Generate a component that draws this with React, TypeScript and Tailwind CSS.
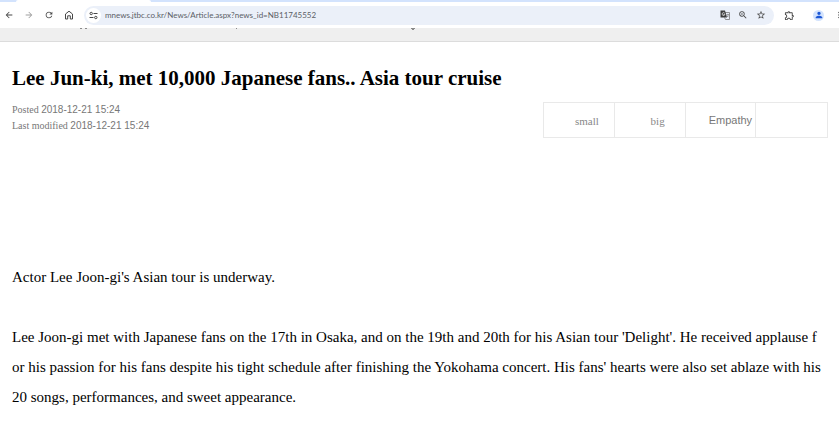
import React, { useState } from 'react';
import {
  MdArrowBack,
  MdArrowForward,
  MdRefresh,
  MdZoomIn,
  MdStarBorder,
  MdOutlineExtension,
  MdPerson,
  MdMoreVert,
} from 'react-icons/md';

const bodyLines = [
  "Lee Joon-gi met with Japanese fans on the 17th in Osaka, and on the 19th and 20th for his Asian tour 'Delight'. He received applause f",
  "or his passion for his fans despite his tight schedule after finishing the Yokohama concert. His fans' hearts were also set ablaze with his",
  '20 songs, performances, and sweet appearance.',
];

function BrowserBar() {
  const [url, setUrl] = useState('mnews.jtbc.co.kr/News/Article.aspx?news_id=NB11745552');

  return (
    <header className="bg-white">
      <div className="flex h-[2px] bg-[#d3e3fd]">
        <div className="ml-4 w-[135px] rounded-t-sm bg-white" />
      </div>
      <div className="flex h-[26px] items-center overflow-hidden text-[#474747]">
        <nav className="flex w-[84px] shrink-0 items-center gap-[10px] pl-1">
          <button type="button" aria-label="Back"><MdArrowBack className="h-[10px] w-[10px]" /></button>
          <button type="button" aria-label="Forward"><MdArrowForward className="h-[10px] w-[10px] text-[#a0a0a0]" /></button>
          <button type="button" aria-label="Reload"><MdRefresh className="h-[10px] w-[10px]" /></button>
          <button type="button" aria-label="Home">
            <svg viewBox="0 0 10 10" className="h-[10px] w-[10px]" fill="none" stroke="currentColor" strokeWidth="1">
              <path d="M1.5 4L5 1.2L8.5 4V9H6.3V5.8H3.7V9H1.5Z" />
            </svg>
          </button>
        </nav>
        <div className="flex h-[19px] min-w-0 flex-1 items-center gap-2 rounded-full bg-[#ebf0f9] pl-[2px] pr-2">
          <button type="button" aria-label="Site information" className="flex h-[15px] w-[15px] shrink-0 items-center justify-center rounded-full bg-white">
            <svg viewBox="0 0 9 9" className="h-[9px] w-[9px]" fill="none" stroke="currentColor" strokeWidth="1">
              <circle cx="2.2" cy="2.5" r="1.2" />
              <path d="M4.5 2.5H8.5M0.5 6.5H4.5" />
              <circle cx="6.8" cy="6.5" r="1.2" />
            </svg>
          </button>
          <input
            aria-label="Address"
            value={url}
            onChange={(e) => setUrl(e.target.value)}
            className="-ml-1 min-w-0 flex-1 bg-transparent font-['Lato',sans-serif] text-[8px] leading-4 text-[#5b5f66] outline-none"
          />
          <button type="button" aria-label="Translate">
            <svg viewBox="0 0 10 10" className="h-[10px] w-[10px]">
              <path d="M4 2.5H9.5V9.5H5.5L4.5 7.5" fill="none" stroke="#777" strokeWidth="0.8" />
              <path d="M0.5 0.5H5L7 7.5H0.5Z" fill="#3c3c3c" />
              <path d="M4.6 3.1A1.4 1.4 0 1 0 4.9 4.3H3.5" fill="none" stroke="#fff" strokeWidth="0.7" />
              <path d="M6.5 4.5H9M7.8 3.8V4.5M8.5 4.7Q8.1 6.2 7 7M7 5.5L8.5 7.2" fill="none" stroke="#777" strokeWidth="0.6" />
            </svg>
          </button>
          <button type="button" aria-label="Zoom"><MdZoomIn className="h-[10px] w-[10px]" /></button>
          <button type="button" aria-label="Bookmark"><MdStarBorder className="h-[10px] w-[10px]" /></button>
        </div>
        <div className="flex w-[65px] shrink-0 items-center pl-[10px]">
          <button type="button" aria-label="Extensions"><MdOutlineExtension className="h-[11px] w-[11px]" /></button>
          <span className="ml-[9px] h-[9px] w-px bg-[#d3e3fd]" />
          <button type="button" aria-label="Profile" className="ml-[9px] flex h-[11px] w-[11px] shrink-0 items-center justify-center rounded-full bg-[#d3e3fd] text-[#1a56d6]">
            <MdPerson className="h-[10px] w-[10px]" />
          </button>
          <button type="button" aria-label="Menu" className="ml-[10px] shrink-0"><MdMoreVert className="h-[10px] w-[10px]" /></button>
        </div>
      </div>
    </header>
  );
}

export default function App() {
  return (
    <div className="overflow-hidden bg-white pb-3 font-['Liberation_Serif',serif] text-black">
      <BrowserBar />

      <div className="h-[14px] border-b border-[#dcdcdc] bg-[#efefef]">
        <svg width="420" height="2" className="block" fill="#8a8a8a">
          <path d="M80 0h2v1h-2zM85 0h2v1h-2zM236 0h1v1h-1zM411 0h4v1h-1v1h-2v-1h-1z" />
        </svg>
      </div>

      <main className="pl-3 pr-[11px] pt-[22px]">
        <h1 className="whitespace-nowrap text-[21px] font-bold leading-7">
          Lee Jun-ki, met 10,000 Japanese fans.. Asia tour cruise
        </h1>

        <div className="mt-[10px] flex justify-between">
          <div className="text-[10px] leading-4 text-[#777]">
            <p>Posted <span className="font-['Liberation_Sans',sans-serif]">2018-12-21 15:24</span></p>
            <p>Last modified <span className="font-['Liberation_Sans',sans-serif]">2018-12-21 15:24</span></p>
          </div>
          <div className="grid h-9 w-[285px] grid-cols-4 divide-x divide-[#e9e9e9] border border-[#e9e9e9] text-[11px] text-[#888]">
            <button type="button" className="pl-4 pt-0.5">small</button>
            <button type="button" className="pl-4 pt-0.5">big</button>
            <button type="button" className="pl-5 font-['Liberation_Sans',sans-serif] text-[#777]">Empathy</button>
            <button type="button" aria-label="Share" />
          </div>
        </div>

        <article className="mt-[124px] text-[15px] leading-[30px]">
          <p>Actor Lee Joon-gi's Asian tour is underway.</p>
          <p className="mt-[30px] whitespace-nowrap">
            {bodyLines.map((line) => (
              <span key={line} className="block">{line}</span>
            ))}
          </p>
        </article>
      </main>
    </div>
  );
}
